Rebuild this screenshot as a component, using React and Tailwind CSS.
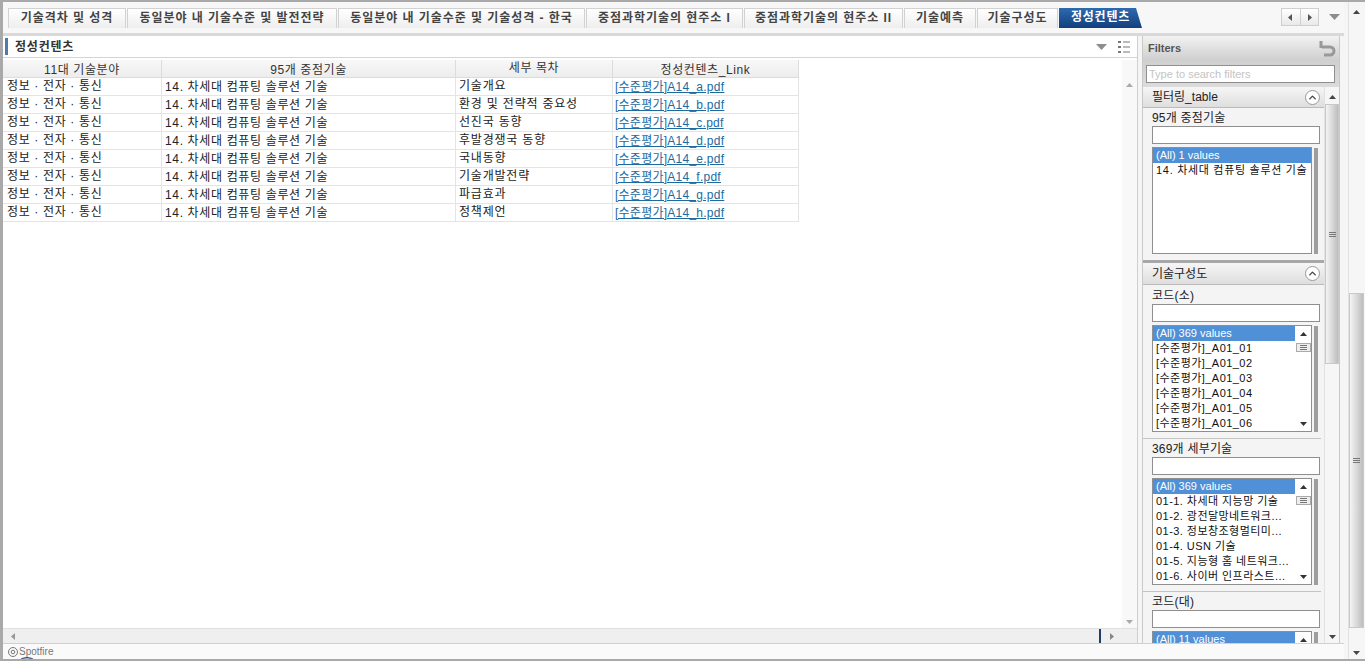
import { ChevronUp } from 'lucide-react'

const font = { fontFamily: '"Liberation Sans", "Noto Sans CJK KR", sans-serif' }

const tabs = [
  { label: '기술격차 및 성격', w: 'w-[118px]' },
  { label: '동일분야 내 기술수준 및 발전전략', w: 'w-[210px]' },
  { label: '동일분야 내 기술수준 및 기술성격 - 한국', w: 'w-[247px]' },
  { label: '중점과학기술의 현주소 I', w: 'w-[157px]' },
  { label: '중점과학기술의 현주소 II', w: 'w-[159px]' },
  { label: '기술예측', w: 'w-[72px]' },
  { label: '기술구성도', w: 'w-[81px]' },
]

const rows = [
  ['기술개요', '[수준평가]A14_a.pdf'],
  ['환경 및 전략적 중요성', '[수준평가]A14_b.pdf'],
  ['선진국 동향', '[수준평가]A14_c.pdf'],
  ['후발경쟁국 동향', '[수준평가]A14_d.pdf'],
  ['국내동향', '[수준평가]A14_e.pdf'],
  ['기술개발전략', '[수준평가]A14_f.pdf'],
  ['파급효과', '[수준평가]A14_g.pdf'],
  ['정책제언', '[수준평가]A14_h.pdf'],
]

const codes = ['_A01_01', '_A01_02', '_A01_03', '_A01_04', '_A01_05', '_A01_06'].map((c) => `[수준평가]${c}`)
const techs = ['01-1. 차세대 지능망 기술', '01-2. 광전달망네트워크...', '01-3. 정보창조형멀티미...', '01-4. USN 기술', '01-5. 지능형 홈 네트워크...', '01-6. 사이버 인프라스트...']

const Arrow = ({ dir = 'up', color = '#555', size = 7 }) => {
  const points = { up: '0,6 3.5,2 7,6', down: '0,2 3.5,6 7,2', left: '5,0 1,3.5 5,7', right: '2,0 6,3.5 2,7' }[dir]
  return (
    <svg width={size} height={size} viewBox="0 0 7 7" className="shrink-0">
      <polygon points={points} fill={color} />
    </svg>
  )
}

const Grip = () => (
  <div className="flex flex-col gap-px w-[7px]">
    <div className="h-px bg-[#777]" />
    <div className="h-px bg-[#777]" />
    <div className="h-px bg-[#777]" />
  </div>
)

const SectionHeader = ({ title, h = 'h-[21px]' }) => (
  <div className={`${h} flex items-center justify-between pl-[9px] pr-[4px] border-b border-[#bbb] bg-gradient-to-b from-[#f6f6f6] to-[#dedede]`}>
    <span className="text-[12px] text-[#222]">{title}</span>
    <span className="w-[15px] h-[15px] rounded-full border border-[#999] bg-white flex items-center justify-center">
      <ChevronUp size={11} strokeWidth={3} className="text-[#444]" />
    </span>
  </div>
)

const ListBox = ({ values, items, scroll, h = 'h-[107px]', tracking = 'tracking-[0.45px]' }) => (
  <div className={`${h} flex gap-[2px] overflow-hidden`}>
    <div className="w-[160px] border border-[#8f8f8f] bg-white flex">
      <div className="flex-1 min-w-0">
        <div className="h-[15px] bg-[#4f90d6] text-white text-[11px] leading-[15px] pl-[3px]">{values}</div>
        {items.map((item) => (
          <div key={item} className={`h-[15px] text-[11px] leading-[15px] text-[#111] pl-[3px] whitespace-nowrap overflow-hidden ${tracking}`}>
            {item}
          </div>
        ))}
      </div>
      {scroll && (
        <div className="w-[16px] flex flex-col items-center justify-between py-[4px] bg-white">
          <div className="flex flex-col items-center gap-[6px]">
            <Arrow dir="up" color="#333" />
            <div className="w-[15px] h-[9px] border border-[#aaa] bg-[#eee] flex items-center justify-center">
              <Grip />
            </div>
          </div>
          <Arrow dir="down" color="#333" />
        </div>
      )}
    </div>
    <div className="w-[4px] bg-[#9e9e9e] mt-px" />
  </div>
)

const FilterField = ({ label, values, items, scroll, h, tracking, top = 'pt-[2px]', divider = true }) => (
  <div className={`pl-[9px] pr-[3px] ${top}`}>
    <div className="h-[16px] text-[12px] leading-[16px] text-[#222] tracking-[0.2px]">{label}</div>
    <div className="w-[168px] h-[18px] border border-[#8f8f8f] bg-white" />
    <div className="mt-[3px]">
      <ListBox values={values} items={items} scroll={scroll} h={h} tracking={tracking} />
    </div>
    {divider && <div className="mt-[6px] -ml-[9px] h-px bg-[#c4c4c4]" />}
  </div>
)

const Scrollbar = ({ topH, thumbH, w = 'w-[15px]' }) => (
  <div className={`${w} h-full flex flex-col items-center bg-[#f6f6f6] border-l border-[#e2e2e2]`}>
    <div className="h-[14px] pt-[4px] flex items-center justify-center">
      <Arrow dir="up" color="#444" />
    </div>
    <div className={`${topH} w-full`} />
    <div className={`${thumbH} w-full border border-[#c9c9c9] bg-gradient-to-r from-[#f4f4f4] via-[#dadada] to-[#bdbdbd] flex items-center justify-center`}>
      <Grip />
    </div>
    <div className="flex-1" />
    <div className="h-[14px] flex items-center justify-center">
      <Arrow dir="down" color="#444" />
    </div>
  </div>
)

const Th = ({ w, children, lift }) => (
  <div className={`${w} h-[17px] border-r border-[#dcdcdc] bg-gradient-to-b from-[#f8f8f8] to-[#ededed] text-center text-[12px] text-[#333] tracking-[0.6px] ${lift ? 'leading-[16px]' : 'leading-[20px]'}`}>
    {children}
  </div>
)

export default function App() {
  return (
    <div style={font} className="relative w-[1365px] h-[661px] flex overflow-hidden bg-[#f5f5f5] border-t-[2px] border-b-[2px] border-l-[3px] border-[#a9a9a9]">
      <div className="w-[1341px] flex flex-col">
        {/* tabs */}
        <div className="h-[34px] pt-[6px] flex border-b-[3px] border-[#d9d9d9] bg-[#f7f7f7]">
          <div className="w-[5px]" />
          {tabs.map((t) => (
            <div
              key={t.label}
              className={`${t.w} h-[20px] mr-[1px] shrink-0 border border-b-0 border-[#d2d2d2] bg-gradient-to-b from-white to-[#eeeeee] text-center text-[12px] leading-[18px] font-bold text-[#444] tracking-[0.95px] whitespace-nowrap overflow-hidden`}
            >
              {t.label}
            </div>
          ))}
          <div className="w-[83px] h-[20px] shrink-0 bg-gradient-to-b from-[#2d6ab0] to-[#123f7d] text-center text-[12px] leading-[19px] font-bold text-white tracking-[0.8px] [clip-path:polygon(0_0,calc(100%-6px)_0,100%_100%,0_100%)]">
            정성컨텐츠
          </div>
          <div className="flex-1" />
          <div className="mr-[5px] w-[38px] h-[18px] flex border border-[#cfcfcf] bg-gradient-to-b from-white to-[#e9e9e9]">
            <div className="flex-1 flex items-center justify-center border-r border-[#cfcfcf]">
              <Arrow dir="left" color="#555" />
            </div>
            <div className="flex-1 flex items-center justify-center">
              <Arrow dir="right" color="#555" />
            </div>
          </div>
          <div className="ml-[5px] mr-[4px] h-[18px] flex items-center">
            <svg width="11" height="8" viewBox="0 0 11 8"><polygon points="0,1 11,1 5.5,7" fill="#8d8d8d" /></svg>
          </div>
        </div>

        <div className="flex-1 flex min-h-0">
          {/* main panel */}
          <div className="w-[1135px] flex flex-col bg-white border-r border-[#cfcfcf]">
            <div className="h-[22px] flex items-center border-b border-[#d4d4d4] pl-[2px] pr-[6px] bg-white">
              <div className="w-[3px] h-[17px] bg-[#4a7da8]" />
              <span className="ml-[7px] text-[12px] font-bold text-[#333] tracking-[0.8px]">정성컨텐츠</span>
              <div className="flex-1" />
              <svg width="11" height="8" viewBox="0 0 11 8"><polygon points="0,1 11,1 5.5,7" fill="#8d8d8d" /></svg>
              <svg width="14" height="14" viewBox="0 0 14 14" className="ml-[10px]" fill="#777">
                <rect x="1" y="1" width="3" height="2" />
                <rect x="6" y="1.5" width="7" height="1" />
                <rect x="1" y="6" width="3" height="2" />
                <rect x="6" y="6.5" width="7" height="1" />
                <rect x="1" y="11" width="3" height="2" />
                <rect x="6" y="11.5" width="7" height="1" />
              </svg>
            </div>
            <div className="flex-1 flex min-h-0 pt-[2px]">
              <div className="flex-1 min-w-0">
                <div className="flex w-[796px] border-b border-[#dcdcdc]">
                  <Th w="w-[159px]">11대 기술분야</Th>
                  <Th w="w-[294px]">95개 중점기술</Th>
                  <Th w="w-[157px]" lift>세부 목차</Th>
                  <Th w="w-[186px]">정성컨텐츠_Link</Th>
                </div>
                {rows.map(([topic, link]) => (
                  <div key={link} className="flex w-[796px] h-[18px] border-b border-[#e4e4e4] text-[12px] text-[#222]">
                    <div className="w-[159px] pl-[4px] leading-[17px] border-r border-[#e4e4e4] tracking-[0.65px]">정보 · 전자 · 통신</div>
                    <div className="w-[294px] pl-[3px] leading-[19px] border-r border-[#e4e4e4] tracking-[0.65px]">14. 차세대 컴퓨팅 솔루션 기술</div>
                    <div className="w-[157px] pl-[3px] leading-[17px] border-r border-[#e4e4e4] tracking-[0.8px]">{topic}</div>
                    <div className="w-[186px] pl-[2px] leading-[18px] border-r border-[#e4e4e4]">
                      <a className="underline text-[#1d6aa0] tracking-[0.25px]">{link}</a>
                    </div>
                  </div>
                ))}
              </div>
              <div className="w-[15px] flex flex-col items-center justify-between py-[3px] bg-[#f8f8f8]">
                <div className="pt-[18px]"><Arrow dir="up" color="#aaa" /></div>
                <Arrow dir="down" color="#aaa" />
              </div>
            </div>
            <div className="h-[15px] flex items-center bg-[#efefef] border-t border-[#e0e0e0] pl-[7px]">
              <Arrow dir="left" color="#999" />
              <div className="ml-[1082px] w-[2px] h-[15px] bg-[#1f3f6b]" />
              <div className="ml-[7px]"><Arrow dir="right" color="#888" /></div>
            </div>
          </div>

          {/* filter panel */}
          <div className="ml-[4px] w-[198px] flex flex-col border-x border-[#c9c9c9] bg-[#d4d4d4]">
            <div className="h-[24px] flex items-center justify-between pl-[5px] pr-[3px] bg-gradient-to-b from-[#f2f2f2] to-[#cfcfcf]">
              <span className="text-[11px] font-bold text-[#555]">Filters</span>
              <svg width="17" height="17" viewBox="0 0 17 17" fill="none" stroke="#999" strokeWidth="3">
                <path d="M2 1v7" />
                <path d="M3 7h8a3.5 3.5 0 0 1 0 8H5" />
              </svg>
            </div>
            <div className="pt-[5px] pb-[4px] pl-[3px] pr-[4px] bg-gradient-to-b from-[#cfcfcf] to-[#dcdcdc]">
              <div className="h-[18px] border border-[#8f8f8f] bg-white text-[11px] leading-[17px] text-[#c4c4c4] pl-[2px]">
                Type to search filters
              </div>
            </div>
            <div className="flex-1 min-h-0 flex bg-[#f4f4f4]">
              <div className="w-[181px] shrink-0 h-full overflow-hidden">
                <SectionHeader title="필터링_table" />
                <FilterField label="95개 중점기술" values="(All) 1 values" items={['14. 차세대 컴퓨팅 솔루션 기술']} tracking="tracking-[0.7px]" divider={false} />
                <div className="mt-[6px] h-[3px] bg-[#a8a8a8]" />
                <SectionHeader title="기술구성도" h="h-[22px]" />
                <FilterField label="코드(소)" values="(All) 369 values" items={codes} scroll top="pt-[3px]" />
                <FilterField label="369개 세부기술" values="(All) 369 values" items={techs} scroll />
                <FilterField label="코드(대)" values="(All) 11 values" items={[]} scroll h="h-[20px]" divider={false} />
              </div>
              <Scrollbar topH="h-[3px]" thumbH="h-[260px]" />
            </div>
          </div>
        </div>

        {/* status bar */}
        <div className="h-[16px] flex items-center pl-[5px] bg-[#fafafa] border-t border-[#d0d0d0] text-[10px] text-[#777]">
          <svg width="10" height="10" viewBox="0 0 10 10" fill="none" stroke="#777" className="mr-px">
            <circle cx="5" cy="5" r="4.5" />
            <circle cx="5" cy="5" r="1.8" />
          </svg>
          Spotfire
        </div>
      </div>

      {/* page scrollbar */}
      <div className="w-[21px] pl-[4px] pr-[1px] bg-[#f5f5f5]">
        <Scrollbar topH="h-[277px]" thumbH="h-[335px]" w="w-[16px]" />
      </div>

      {/* blue dot peeking from under the status bar */}
      <div className="absolute left-[11px] top-[655px] w-[26px] h-[26px] rounded-full bg-[#a9d3ea] border border-[#336]" />
    </div>
  )
}
